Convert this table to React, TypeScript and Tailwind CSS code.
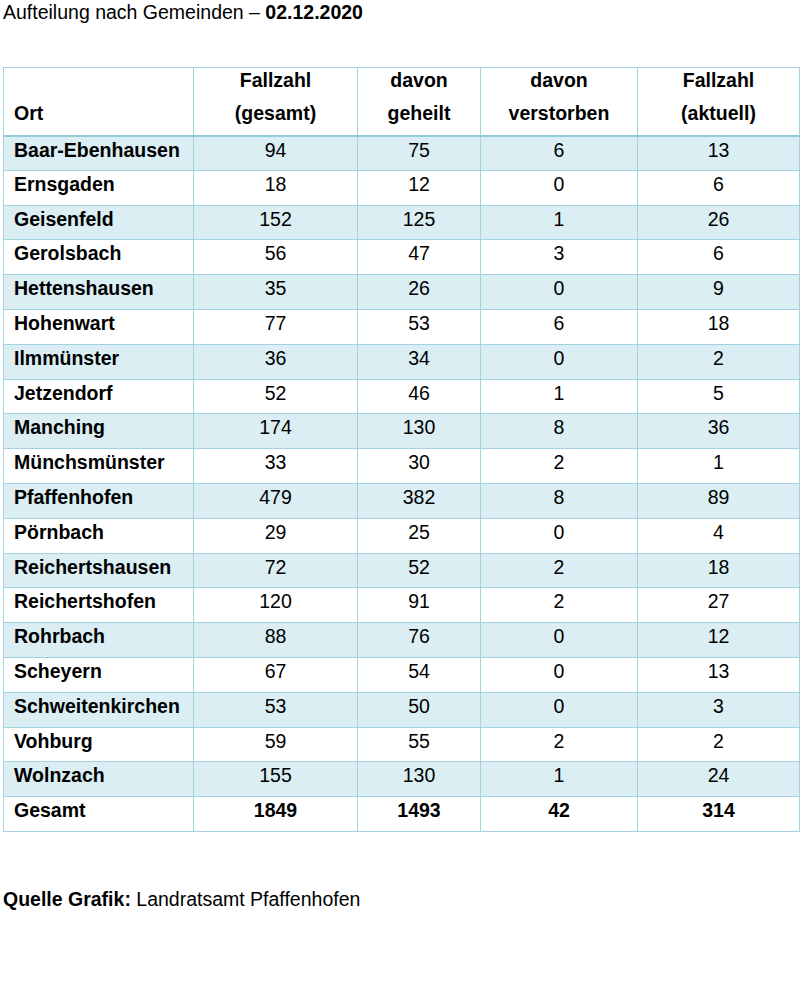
import React from "react";

const rows: [string, string, string, string, string][] = [
  ["Baar-Ebenhausen", "94", "75", "6", "13"],
  ["Ernsgaden", "18", "12", "0", "6"],
  ["Geisenfeld", "152", "125", "1", "26"],
  ["Gerolsbach", "56", "47", "3", "6"],
  ["Hettenshausen", "35", "26", "0", "9"],
  ["Hohenwart", "77", "53", "6", "18"],
  ["Ilmmünster", "36", "34", "0", "2"],
  ["Jetzendorf", "52", "46", "1", "5"],
  ["Manching", "174", "130", "8", "36"],
  ["Münchsmünster", "33", "30", "2", "1"],
  ["Pfaffenhofen", "479", "382", "8", "89"],
  ["Pörnbach", "29", "25", "0", "4"],
  ["Reichertshausen", "72", "52", "2", "18"],
  ["Reichertshofen", "120", "91", "2", "27"],
  ["Rohrbach", "88", "76", "0", "12"],
  ["Scheyern", "67", "54", "0", "13"],
  ["Schweitenkirchen", "53", "50", "0", "3"],
  ["Vohburg", "59", "55", "2", "2"],
  ["Wolnzach", "155", "130", "1", "24"],
];

export default function App() {
  return (
    <div
      className="w-[800px] h-[981px] bg-white text-black text-[19.5px] leading-[24px]"
      style={{ fontFamily: '"Liberation Sans", Arial, sans-serif' }}
    >
      <div className="pl-[3px] pt-0">
        Aufteilung nach Gemeinden – <span className="font-bold">02.12.2020</span>
      </div>
      <div className="pl-[3px] pt-[43px]">
        <table className="border-collapse table-fixed w-[796px]">
          <colgroup>
            <col className="w-[190px]" />
            <col className="w-[164px]" />
            <col className="w-[123px]" />
            <col className="w-[157px]" />
            <col className="w-[162px]" />
          </colgroup>
          <thead>
            <tr className="h-[68px] font-bold border-b-2 border-[#92cddc]">
              <th className="border border-[#a3d3e0] text-left align-top p-0 pl-[10px] font-bold">
                <div className="h-[25px]" />
                <div className="mt-[7px] leading-[26px]">Ort</div>
              </th>
              {[
                ["Fallzahl", "(gesamt)"],
                ["davon", "geheilt"],
                ["davon", "verstorben"],
                ["Fallzahl", "(aktuell)"],
              ].map(([a, b], i) => (
                <th key={i} className="border border-[#a3d3e0] text-center align-top p-0 font-bold">
                  <div className="leading-[25px]">{a}</div>
                  <div className="mt-[7px] leading-[26px]">{b}</div>
                </th>
              ))}
            </tr>
          </thead>
          <tbody>
            {rows.map((r, i) => (
              <tr key={r[0]} className={`h-[34.8px] ${i % 2 === 0 ? "bg-[#daeef3]" : "bg-white"}`}>
                <td className="border border-[#a3d3e0] pl-[10px] font-bold align-top pt-[1px]">{r[0]}</td>
                {r.slice(1).map((v, j) => (
                  <td key={j} className="border border-[#a3d3e0] text-center align-top pt-[1px]">{v}</td>
                ))}
              </tr>
            ))}
            <tr className="h-[34.8px] font-bold bg-white">
              <td className="border border-[#a3d3e0] pl-[10px] align-top pt-[1px]">Gesamt</td>
              <td className="border border-[#a3d3e0] text-center align-top pt-[1px]">1849</td>
              <td className="border border-[#a3d3e0] text-center align-top pt-[1px]">1493</td>
              <td className="border border-[#a3d3e0] text-center align-top pt-[1px]">42</td>
              <td className="border border-[#a3d3e0] text-center align-top pt-[1px]">314</td>
            </tr>
          </tbody>
        </table>
      </div>
      <div className="pl-[3px] pt-[55px]">
        <span className="font-bold">Quelle Grafik:</span> Landratsamt Pfaffenhofen
      </div>
    </div>
  );
}
